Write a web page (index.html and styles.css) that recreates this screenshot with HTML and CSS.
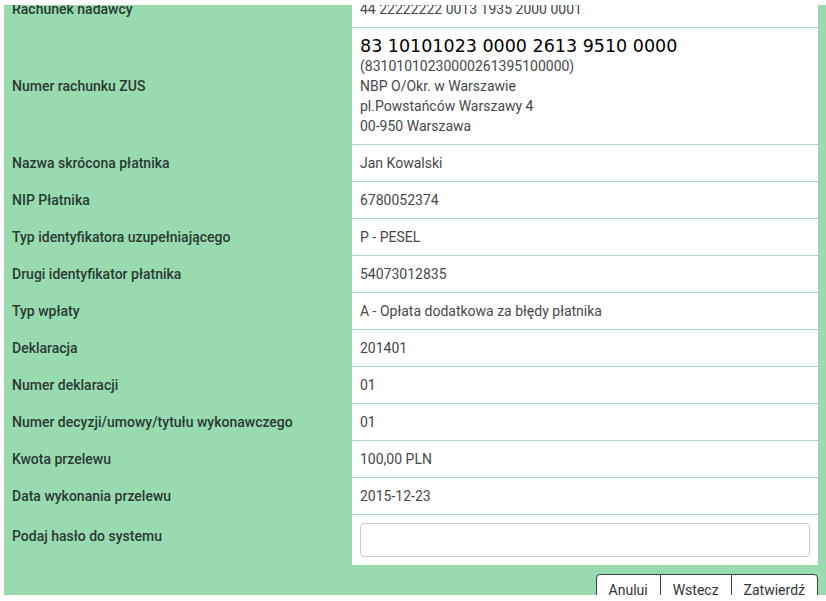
FILE: index.html
```html
<!DOCTYPE html>
<html lang="pl">
<head>
  <meta charset="UTF-8" />
  <title>Przelew ZUS - potwierdzenie</title>
  <link rel="stylesheet" href="styles.css">
</head>
<body>
  <div class="panel">
    <table class="dane">
      <tr>
        <th>Rachunek nadawcy</th>
        <td>44 22222222 0013 1935 2000 0001</td>
      </tr>
      <tr>
        <th>Numer rachunku ZUS</th>
        <td>
          <div class="nrb">83 10101023 0000 2613 9510 0000</div>
          <div>(83101010230000261395100000)</div>
          <div>NBP O/Okr. w Warszawie</div>
          <div>pl.Powstańców Warszawy 4</div>
          <div>00-950 Warszawa</div>
        </td>
      </tr>
      <tr>
        <th>Nazwa skrócona płatnika</th>
        <td>Jan Kowalski</td>
      </tr>
      <tr>
        <th>NIP Płatnika</th>
        <td>6780052374</td>
      </tr>
      <tr>
        <th>Typ identyfikatora uzupełniającego</th>
        <td>P - PESEL</td>
      </tr>
      <tr>
        <th>Drugi identyfikator płatnika</th>
        <td>54073012835</td>
      </tr>
      <tr>
        <th>Typ wpłaty</th>
        <td>A - Opłata dodatkowa za błędy płatnika</td>
      </tr>
      <tr>
        <th>Deklaracja</th>
        <td>201401</td>
      </tr>
      <tr>
        <th>Numer deklaracji</th>
        <td>01</td>
      </tr>
      <tr>
        <th>Numer decyzji/umowy/tytułu wykonawczego</th>
        <td>01</td>
      </tr>
      <tr>
        <th>Kwota przelewu</th>
        <td>100,00 PLN</td>
      </tr>
      <tr>
        <th>Data wykonania przelewu</th>
        <td>2015-12-23</td>
      </tr>
      <tr>
        <th class="etykieta-hasla">Podaj hasło do systemu</th>
        <td><input type="password" class="haslo" /></td>
      </tr>
    </table>

    <div class="przyciski">
      <button>Anului</button>
      <button>Wstecz</button>
      <button>Zatwierdź</button>
    </div>
  </div>

  <!-- paski na górze i dole okna -->
  <div class="pasek gora"></div>
  <div class="pasek dol"></div>
</body>
</html>
```

FILE: styles.css
```css
html, body {
  margin: 0;
  padding: 0;
  height: 100%;
  overflow: hidden;
  background: #fff;
  font-family: Roboto, "Liberation Sans", sans-serif;
  font-size: 14px;
  line-height: 20px;
}

.panel {
  margin: -9px 0 0 4px;
  padding: 0 8px 40px 0;
  width: 814px;
  background: #97dbae;
}

.dane {
  width: 100%;
  border-collapse: collapse;
}

.dane th {
  width: 332px;
  padding: 8px;
  text-align: left;
  font-weight: 500;
  color: #2b3a32;
  vertical-align: middle;
}

.dane th.etykieta-hasla {
  vertical-align: top;
  padding-top: 11px;
}

.dane td {
  padding: 8px;
  background: #fff;
  color: #484848;
  border-top: 1px solid #a9dcbf;
  vertical-align: top;
}

.dane tr:first-child td {
  border-top: none;
}

.nrb {
  font-family: "DejaVu Sans", sans-serif;
  font-size: 17.5px;
  color: #000;
  line-height: 20px;
}

.haslo {
  display: block;
  box-sizing: border-box;
  width: 100%;
  height: 34px;
  border: 1px solid #ccc;
  border-radius: 4px;
  background: #fff;
}

.przyciski {
  display: flex;
  justify-content: flex-end;
  margin-top: 9px;
}

.przyciski button {
  box-sizing: border-box;
  height: 34px;
  padding: 0 12px 3px;
  background: #fff;
  border: 1px solid #2f4a3c;
  margin-left: -1px;
  font-family: Roboto, "Liberation Sans", sans-serif;
  font-size: 14px;
  line-height: 20px;
  color: #333;
}

.przyciski button:first-child {
  border-radius: 4px 0 0 0;
}

.przyciski button:last-child {
  border-radius: 0 4px 0 0;
}

.pasek {
  position: fixed;
  left: 0;
  right: 0;
  background: #fff;
}

.gora {
  top: 0;
  height: 5px;
}

.dol {
  bottom: 0;
  height: 6px;
}
```
